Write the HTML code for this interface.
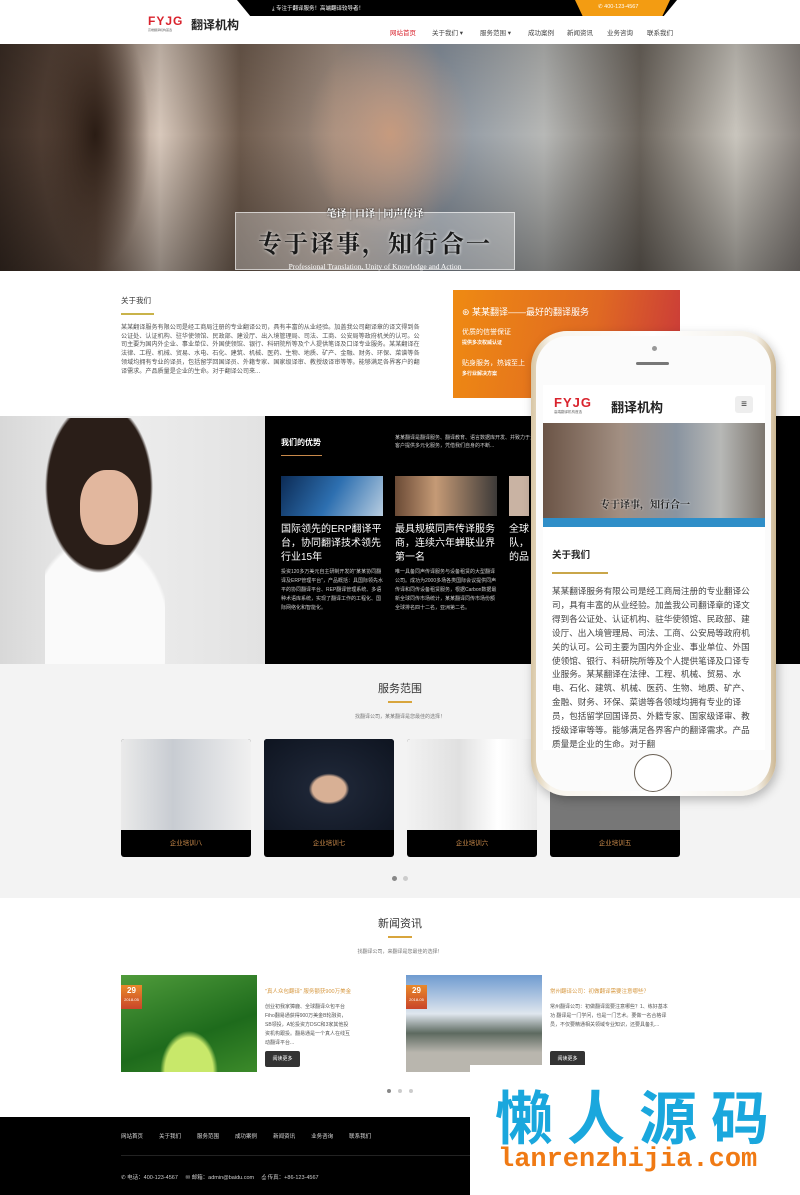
<!DOCTYPE html>
<html><head><meta charset="utf-8">
<style>
*{margin:0;padding:0;box-sizing:border-box}
body{width:800px;height:1195px;position:relative;overflow:hidden;font-family:"Liberation Sans","Noto Sans CJK SC",sans-serif;background:#fff;color:#333}
.a{position:absolute}
.nav span{position:absolute;top:27px;font-size:6.5px;color:#444}
.p{font-size:6.1px;line-height:8.7px;color:#555}
.card{position:absolute;top:739px;width:130px;height:118px;border-radius:3px;overflow:hidden;background:#000}
.card .img{height:91px}
.card .l{height:27px;line-height:27px;text-align:center;color:#c8894a;font-size:6.5px}
.fn span{margin-right:16px}
</style></head><body>
<!-- header -->
<div class="a" style="left:0;top:0;width:800px;height:44px;background:#fff"></div>
<div class="a" style="left:237px;top:0;width:440px;height:16px;background:#000;clip-path:polygon(0 0,100% 0,97% 100%,3% 100%)"></div>
<div class="a" style="left:575px;top:0;width:95px;height:16px;background:#f39c12;clip-path:polygon(0 0,100% 0,92% 100%,8% 100%)"></div>
<div class="a" style="left:272px;top:4px;font-size:5.5px;color:#fff">⤓ 专注于翻译服务！高端翻译较导者！</div>
<div class="a" style="left:598px;top:4px;font-size:5.5px;color:#fff">✆ 400-123-4567</div>
<div class="a" style="left:148px;top:14px;font-size:12px;font-weight:bold;color:#d9232d;letter-spacing:1px">FYJG</div>
<div class="a" style="left:148px;top:28px;font-size:3px;color:#666">高端翻译机构首选</div>
<div class="a" style="left:191px;top:16px;font-size:12px;color:#222;font-weight:bold">翻译机构</div>
<div class="nav">
<span style="left:390px;color:#d9232d">网站首页</span><span style="left:432px">关于我们 ▾</span><span style="left:480px">服务范围 ▾</span><span style="left:528px">成功案例</span><span style="left:567px">新闻资讯</span><span style="left:607px">业务咨询</span><span style="left:647px">联系我们</span>
</div>
<!-- hero -->
<div class="a" style="left:0;top:44px;width:800px;height:227px;background:linear-gradient(90deg,#3a2c24 0%,#6b5446 12%,#d8c8bb 20%,#6f5c4e 30%,#a28f82 42%,#8a94a0 55%,#b7b8b6 68%,#6c655d 80%,#c9c5bd 92%,#8b8580 100%)"></div>
<div class="a" style="left:0;top:44px;width:800px;height:227px;background:linear-gradient(180deg,rgba(0,0,0,.15),rgba(0,0,0,0) 40%,rgba(0,0,0,.35))"></div>
<div class="a" style="left:40px;top:44px;width:110px;height:227px;background:radial-gradient(ellipse at 50% 40%,#2a1c14,rgba(0,0,0,0) 70%)"></div>
<div class="a" style="left:300px;top:44px;width:180px;height:200px;background:radial-gradient(ellipse at 50% 45%,#c69a7e,rgba(0,0,0,0) 65%)"></div>
<div class="a" style="left:235px;top:212px;width:280px;height:58px;border:1px solid rgba(255,255,255,.6);background:rgba(255,255,255,.3)"></div>
<div class="a" style="left:235px;top:205px;width:280px;text-align:center;color:#fff;font-size:10px;font-weight:bold;font-family:'Noto Serif CJK SC',serif;text-shadow:0 0 2px #000">笔译 | 口译 | 同声传译</div>
<div class="a" style="left:235px;top:224px;width:280px;text-align:center;color:#1a1a1a;font-size:24px;font-weight:bold;font-family:'Noto Serif CJK SC',serif;letter-spacing:2px;text-shadow:0 0 3px #fff">专于译事，知行合一</div>
<div class="a" style="left:235px;top:262px;width:280px;text-align:center;color:#fff;font-size:7.5px;font-family:'Liberation Serif',serif">Professional Translation, Unity of Knowledge and Action</div>
<!-- about -->
<div class="a" style="left:121px;top:295px;font-size:7.5px;color:#333">关于我们</div>
<div class="a" style="left:121px;top:313px;width:33px;height:2px;background:#c9b34a"></div>
<div class="a p" style="left:121px;top:324px;width:300px">某某翻译服务有限公司是经工商局注册的专业翻译公司，具有丰富的从业经验。加盖我公司翻译章的译文得到各公证处、认证机构、驻华使领馆、民政部、建设厅、出入境管理局、司法、工商、公安局等政府机关的认可。公司主要为国内外企业、事业单位、外国使领馆、银行、科研院所等及个人提供笔译及口译专业服务。某某翻译在法律、工程、机械、贸易、水电、石化、建筑、机械、医药、生物、地质、矿产、金融、财务、环保、菜谱等各领域均拥有专业的译员，包括留学回国译员、外籍专家、国家级译审、教授级译审等等。能够满足各界客户的翻译需求。产品质量是企业的生命。对于翻译公司来...</div>
<div class="a" style="left:453px;top:290px;width:227px;height:108px;background:linear-gradient(100deg,#ef8a12,#e06a22 60%,#c9383a)"></div>
<div class="a" style="left:462px;top:305px;font-size:9px;color:#fff">⊛ 某某翻译——最好的翻译服务</div>
<div class="a" style="left:462px;top:327px;font-size:7px;color:#fff">优质的信誉保证</div>
<div class="a" style="left:462px;top:339px;font-size:5px;color:#fff;font-weight:bold">提供多次权威认证</div>
<div class="a" style="left:462px;top:358px;font-size:7px;color:#fff">贴身服务，热诚至上</div>
<div class="a" style="left:462px;top:370px;font-size:5px;color:#fff;font-weight:bold">多行业解决方案</div>
<!-- advantage -->
<div class="a" style="left:0;top:416px;width:265px;height:248px;background:linear-gradient(90deg,#d8d8d8,#eeeeee 40%,#e2e2e2)"></div>
<div class="a" style="left:45px;top:418px;width:120px;height:246px;background:radial-gradient(ellipse 45% 35% at 45% 28%,#2a1e18 0 95%,rgba(0,0,0,0) 100%),radial-gradient(ellipse 60% 40% at 45% 88%,#fafafa 0 95%,rgba(0,0,0,0) 100%)"></div>
<div class="a" style="left:80px;top:470px;width:58px;height:75px;border-radius:45%;background:#e2b79e"></div>
<div class="a" style="left:265px;top:416px;width:535px;height:248px;background:#000"></div>
<div class="a" style="left:281px;top:437px;font-size:8px;color:#fff;font-weight:bold">我们的优势</div>
<div class="a" style="left:281px;top:455px;width:41px;height:1px;background:#c8894a"></div>
<div class="a" style="left:395px;top:434px;width:140px;font-size:5px;line-height:8px;color:#ccc">某某翻译是翻译服务、翻译教育、语言数据库开发、并致力于为客户提供多元化服务，凭借我们自身的不断...</div>
<div class="a" style="left:281px;top:476px;width:102px;height:40px;background:linear-gradient(120deg,#0c2b55,#2d6fb0 50%,#b8cde0)"></div>
<div class="a" style="left:395px;top:476px;width:102px;height:40px;background:linear-gradient(90deg,#6a4a35,#c59a76 40%,#3d3a38)"></div>
<div class="a" style="left:509px;top:476px;width:20px;height:40px;background:#c9b3a3"></div>
<div class="a" style="left:281px;top:523px;width:105px;font-size:10px;line-height:14px;color:#fff">国际领先的ERP翻译平台，协同翻译技术领先行业15年</div>
<div class="a" style="left:395px;top:523px;width:105px;font-size:10px;line-height:14px;color:#fff">最具规模同声传译服务商，连续六年蝉联业界第一名</div>
<div class="a" style="left:509px;top:523px;width:20px;overflow:hidden;font-size:10px;line-height:14px;color:#fff;white-space:nowrap">全球5<br>队，<br>的品</div>
<div class="a" style="left:281px;top:568px;width:103px;font-size:5px;line-height:9px;color:#ccc">投资120多万美元自主研制开发的"某某协同翻译及ERP管理平台"，产品概括：具国际领先水平的协同翻译平台、REP翻译管理系统、多语种术语库系统，实现了翻译工作的工程化、国际网络化和智能化。</div>
<div class="a" style="left:395px;top:568px;width:103px;font-size:5px;line-height:9px;color:#ccc">唯一具备同声传译服务与设备租赁的大型翻译公司。成功为2000多场各类国际会议提供同声传译和同传设备租赁服务，根据Carbon数据最新全球同传市场统计，某某翻译同传市场份额全球排名四十二名，亚洲第二名。</div>
<!-- services -->
<div class="a" style="left:0;top:664px;width:800px;height:234px;background:#f3f3f3"></div>
<div class="a" style="left:0;top:680px;width:800px;text-align:center;font-size:11px;color:#333">服务范围</div>
<div class="a" style="left:388px;top:701px;width:24px;height:2px;background:#d8a53c"></div>
<div class="a" style="left:0;top:713px;width:800px;text-align:center;font-size:5px;color:#777">找翻译公司，某某翻译是您最佳的选择！</div>
<div class="card" style="left:121px"><div class="img" style="background:linear-gradient(90deg,#eaeaea,#c8ccd2 40%,#f0f0f0)"></div><div class="l">企业培训八</div></div>
<div class="card" style="left:264px"><div class="img" style="background:radial-gradient(ellipse at 50% 55%,#d8b095 0 18%,#1d2535 22%,#0e1420)"></div><div class="l">企业培训七</div></div>
<div class="card" style="left:407px"><div class="img" style="background:linear-gradient(90deg,#f2f2f2,#e0e0e0 40%,#fff 70%,#eaeaea)"></div><div class="l">企业培训六</div></div>
<div class="card" style="left:550px"><div class="img" style="background:#777"></div><div class="l">企业培训五</div></div>
<div class="a" style="left:392px;top:876px;width:5px;height:5px;border-radius:50%;background:#888"></div>
<div class="a" style="left:403px;top:876px;width:5px;height:5px;border-radius:50%;background:#ccc"></div>
<!-- news -->
<div class="a" style="left:0;top:915px;width:800px;text-align:center;font-size:11px;color:#333">新闻资讯</div>
<div class="a" style="left:388px;top:936px;width:24px;height:2px;background:#d8a53c"></div>
<div class="a" style="left:0;top:948px;width:800px;text-align:center;font-size:5px;color:#777">找翻译公司，来翻译是您最佳的选择！</div>
<div class="a" style="left:121px;top:975px;width:136px;height:97px;background:radial-gradient(ellipse at 50% 100%,#c8e86a 0 25%,rgba(0,0,0,0) 30%),linear-gradient(160deg,#4f9b3b,#1e6b1c 60%,#3c8a2a)"></div>
<div class="a" style="left:121px;top:985px;width:21px;height:24px;background:linear-gradient(#e9892a,#c9452a);color:#fff;text-align:center;font-size:8px;line-height:12px;font-weight:bold">29<div style="font-size:4px;line-height:6px;font-weight:normal">2018-05</div></div>
<div class="a" style="left:265px;top:987px;font-size:5.5px;color:#d79a44">"真人众包翻译" 服务额获900万美金</div>
<div class="a" style="left:265px;top:1003px;width:85px;font-size:5px;line-height:9px;color:#555">创业初我家獐鹿、全球翻译众包平台Fiho翻易通获得900万美金B轮融资，SB领投，A轮投资方DSC和3家其他投资机构跟投。翻易通是一个真人在线互动翻译平台...</div>
<div class="a" style="left:265px;top:1051px;width:35px;height:16px;background:#333;border-radius:2px;color:#fff;font-size:5px;line-height:16px;text-align:center">阅读更多</div>
<div class="a" style="left:406px;top:975px;width:136px;height:97px;background:linear-gradient(180deg,#6f9bd0,#dfe6ee 40%,#5d6a60 60%,#b9b6ae 80%)"></div>
<div class="a" style="left:406px;top:985px;width:21px;height:24px;background:linear-gradient(#e9892a,#c9452a);color:#fff;text-align:center;font-size:8px;line-height:12px;font-weight:bold">29<div style="font-size:4px;line-height:6px;font-weight:normal">2018-05</div></div>
<div class="a" style="left:550px;top:987px;font-size:5.5px;color:#d79a44">常州翻译公司：初做翻译需要注意哪些？</div>
<div class="a" style="left:550px;top:1003px;width:120px;font-size:5px;line-height:9px;color:#555">常州翻译公司：初做翻译需要注意哪些？1、练好基本功 翻译是一门学问，也是一门艺术。要做一名合格译员，不仅要精通相关领域专业知识，还要具备扎...</div>
<div class="a" style="left:550px;top:1051px;width:35px;height:16px;background:#333;border-radius:2px;color:#fff;font-size:5px;line-height:16px;text-align:center">阅读更多</div>
<div class="a" style="left:387px;top:1089px;width:4px;height:4px;border-radius:50%;background:#888"></div>
<div class="a" style="left:398px;top:1089px;width:4px;height:4px;border-radius:50%;background:#ccc"></div>
<div class="a" style="left:409px;top:1089px;width:4px;height:4px;border-radius:50%;background:#ccc"></div>
<!-- footer -->
<div class="a" style="left:0;top:1117px;width:800px;height:78px;background:#000"></div>
<div class="a fn" style="left:121px;top:1132px;font-size:5.5px;color:#ddd;white-space:nowrap"><span>网站首页</span><span>关于我们</span><span>服务范围</span><span>成功案例</span><span>新闻资讯</span><span>业务咨询</span><span>联系我们</span></div>
<div class="a" style="left:121px;top:1155px;width:560px;height:1px;background:#222"></div>
<div class="a" style="left:121px;top:1173px;font-size:5.5px;color:#ccc;white-space:nowrap">✆ 电话：400-123-4567 &nbsp;&nbsp;&nbsp; ✉ 邮箱：admin@baidu.com &nbsp;&nbsp;&nbsp; ⎙ 传真：+86-123-4567</div>
<!-- watermark -->
<div class="a" style="left:470px;top:1065px;width:330px;height:130px;background:#fff"></div>
<div class="a" style="left:495px;top:1072px;font-size:58px;color:#1aa7dd;font-weight:bold;letter-spacing:14px;white-space:nowrap">懒人源码</div>
<div class="a" style="left:498px;top:1145px;font-size:27px;color:#f07a14;font-family:'Liberation Mono',monospace;font-weight:bold;white-space:nowrap;letter-spacing:0px">lanrenzhijia.com</div>
<!-- phone -->
<div class="a" style="left:531px;top:331px;width:245px;height:465px;border-radius:36px;background:linear-gradient(90deg,#d8c6a4,#f8f4ec 8%,#fff 50%,#f4f0e8 92%,#cdb894);box-shadow:2px 4px 10px rgba(0,0,0,.25)"></div>
<div class="a" style="left:536px;top:336px;width:235px;height:455px;border-radius:32px;background:#fbfbfb"></div>
<div class="a" style="left:652px;top:346px;width:5px;height:5px;border-radius:50%;background:#999"></div>
<div class="a" style="left:636px;top:362px;width:33px;height:3px;border-radius:2px;background:#777"></div>
<div class="a" style="left:543px;top:385px;width:222px;height:365px;background:#fff"></div>
<div class="a" style="left:554px;top:395px;font-size:13px;font-weight:bold;color:#d9232d;letter-spacing:1px">FYJG</div>
<div class="a" style="left:554px;top:410px;font-size:3.5px;color:#666">高端翻译机构首选</div>
<div class="a" style="left:611px;top:397px;font-size:13px;font-weight:bold;color:#222">翻译机构</div>
<div class="a" style="left:735px;top:396px;width:18px;height:17px;border-radius:3px;background:#eee;text-align:center;font-size:10px;line-height:17px;color:#333">≡</div>
<div class="a" style="left:543px;top:423px;width:222px;height:95px;background:linear-gradient(90deg,#6b5446,#a28f82 35%,#8a94a0 60%,#b7b8b6 80%,#7c766f)"></div>
<div class="a" style="left:600px;top:496px;font-size:10px;font-weight:bold;color:#222;text-shadow:0 0 2px #fff;font-family:'Noto Serif CJK SC',serif">专于译事，知行合一</div>
<div class="a" style="left:543px;top:518px;width:222px;height:9px;background:#2f8ec8"></div>
<div class="a" style="left:552px;top:547px;font-size:9.5px;font-weight:bold;color:#222">关于我们</div>
<div class="a" style="left:552px;top:572px;width:56px;height:1.5px;background:#c9a64a"></div>
<div class="a" style="left:552px;top:585px;width:205px;height:165px;overflow:hidden;font-size:8.6px;line-height:13.9px;color:#444">某某翻译服务有限公司是经工商局注册的专业翻译公司，具有丰富的从业经验。加盖我公司翻译章的译文得到各公证处、认证机构、驻华使领馆、民政部、建设厅、出入境管理局、司法、工商、公安局等政府机关的认可。公司主要为国内外企业、事业单位、外国使领馆、银行、科研院所等及个人提供笔译及口译专业服务。某某翻译在法律、工程、机械、贸易、水电、石化、建筑、机械、医药、生物、地质、矿产、金融、财务、环保、菜谱等各领域均拥有专业的译员，包括留学回国译员、外籍专家、国家级译审、教授级译审等等。能够满足各界客户的翻译需求。产品质量是企业的生命。对于翻</div>
<div class="a" style="left:634px;top:754px;width:38px;height:38px;border-radius:50%;border:1.5px solid #6b6155;background:#fff"></div>
</body></html>
